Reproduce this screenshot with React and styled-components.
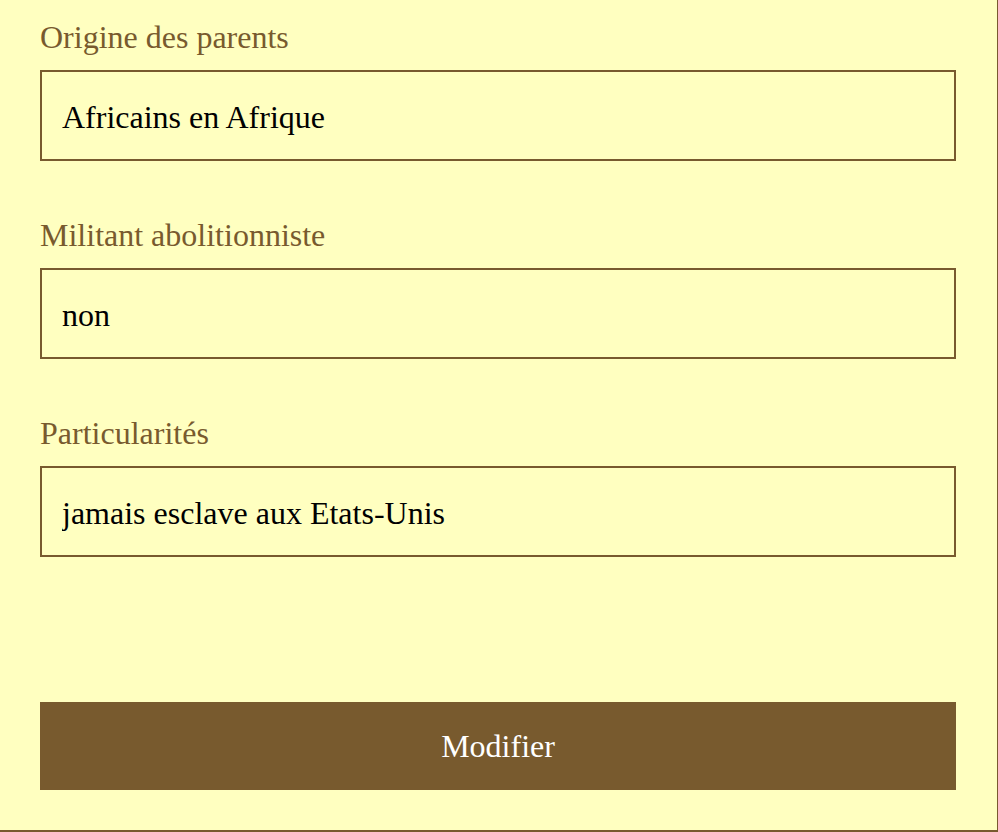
import React from 'react'
import styled, { createGlobalStyle } from 'styled-components'

const brown = '#785a2e'

const GlobalStyle = createGlobalStyle`
  html, body {
    margin: 0;
    padding: 0;
    background: #ffffc0;
  }
  body {
    font-family: "Liberation Serif", "Times New Roman", serif;
  }
`

const fields = [
  { label: 'Origine des parents', value: 'Africains en Afrique' },
  { label: 'Militant abolitionniste', value: 'non' },
  { label: 'Particularités', value: 'jamais esclave aux Etats-Unis' },
]

const App = () => {
  return (
    <>
      <GlobalStyle />
      <Wrapper>
        <Form onSubmit={(e) => e.preventDefault()}>
          {fields.map((f) => (
            <Field key={f.label}>
              <Label htmlFor={f.label}>{f.label}</Label>
              <Input id={f.label} defaultValue={f.value} />
            </Field>
          ))}
          <Button type="submit">Modifier</Button>
        </Form>
      </Wrapper>
    </>
  )
}

const Wrapper = styled.main`
  width: 998px;
  height: 832px;
  box-sizing: border-box;
  background: #ffffc0;
  border-right: 1px solid ${brown};
  border-bottom: 2px solid ${brown};
  padding: 19px 41px 40px 40px;
`

const Form = styled.form`
  height: 100%;
  display: flex;
  flex-direction: column;
`

const Field = styled.div`
  display: flex;
  flex-direction: column;
  margin-bottom: 56px;
`

const Label = styled.label`
  display: block;
  font-family: "Liberation Serif", "Times New Roman", serif;
  font-size: 32px;
  line-height: 36px;
  color: ${brown};
  margin-bottom: 15px;
`

const Input = styled.input`
  box-sizing: border-box;
  width: 100%;
  height: 91px;
  margin: 0;
  padding: 3px 20px 0;
  border: 2px solid ${brown};
  border-radius: 0;
  background: transparent;
  font-family: "Liberation Serif", "Times New Roman", serif;
  font-size: 32px;
  color: #000;
  outline: none;
`

const Button = styled.button`
  margin-top: auto;
  width: 100%;
  height: 88px;
  border: none;
  border-radius: 0;
  background: ${brown};
  color: #fff;
  font-family: "Liberation Serif", "Times New Roman", serif;
  font-size: 32px;
  cursor: pointer;
`

export default App
